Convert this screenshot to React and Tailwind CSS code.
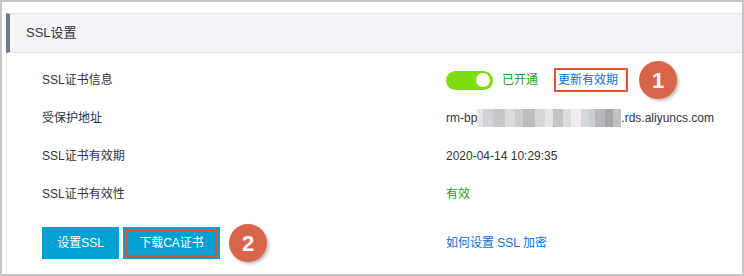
import React from "react";

const blur = [
  "w-[6px] bg-[#e4e4e8]",
  "w-[10px] bg-[#d4d2d6]",
  "w-[12px] bg-[#c9c6ca]",
  "w-[10px] bg-[#dcdadc]",
  "w-[8px] bg-[#cfcccf]",
  "w-[12px] bg-[#bfbcbf]",
  "w-[10px] bg-[#d8d6d8]",
  "w-[8px] bg-[#e6e4e6]",
  "w-[10px] bg-[#c6c3c6]",
  "w-[8px] bg-[#dedcde]",
  "w-[10px] bg-[#eeeef0]",
  "w-[8px] bg-[#d6d6dc]",
  "w-[6px] bg-[#c8d0d6]",
  "w-[10px] bg-[#b9b6b9]",
  "w-[8px] bg-[#a9a6a9]",
  "w-[8px] bg-[#c2c0c2]",
];

function Badge({ n }) {
  return (
    <span className="flex h-[38px] w-[38px] items-center justify-center rounded-full bg-[#d8654a] text-[22px] font-bold text-white shadow-[2px_2px_3px_rgba(0,0,0,0.25)]">
      {n}
    </span>
  );
}

function Row({ label, children }) {
  return (
    <div className="grid h-[38px] grid-cols-[404px_1fr] items-center">
      <span className="text-[#333]">{label}</span>
      <div className="flex items-center">{children}</div>
    </div>
  );
}

export default function App() {
  return (
    <div
      className="h-[276px] w-[744px] overflow-hidden border-2 border-[#c6c6c6] bg-white pl-[4px] pt-[11px] text-[12px]"
      style={{ fontFamily: '"Liberation Sans", "Noto Sans CJK SC", sans-serif' }}
    >
      <div className="h-full border-l border-[#e3e6ea]">
        <div className="-ml-px flex h-[40px] items-center border-y border-[#e1e4e8] border-l-4 border-l-[#6f7984] bg-[#f4f5f8] pl-[16px] text-[13px] text-[#333]">
          SSL设置
        </div>

        <div className="pl-[35px] pt-[8px]">
          <Row label="SSL证书信息">
            <span className="flex h-[19px] w-[47px] items-center justify-end rounded-full bg-[#7ddc12] pr-[3px]">
              <span className="h-[14px] w-[14px] rounded-full bg-white" />
            </span>
            <span className="ml-[9px] text-[#1c9a28]">已开通</span>
            <span className="ml-[16px] flex h-[24px] w-[74px] items-center border-2 border-[#e0522f] pl-[2px] text-[#0a6fd0]">
              更新有效期
            </span>
            <span className="ml-[11px]">
              <Badge n="1" />
            </span>
          </Row>
          <Row label="受保护地址">
            <span className="text-[#333]">rm-bp</span>
            <span className="flex h-[18px] items-center">
              {blur.map((c, i) => (
                <span key={i} className={"h-full " + c} />
              ))}
            </span>
            <span className="text-[#333]">.rds.aliyuncs.com</span>
          </Row>
          <Row label="SSL证书有效期">
            <span className="text-[#333]">2020-04-14 10:29:35</span>
          </Row>
          <Row label="SSL证书有效性">
            <span className="text-[#1c9a28]">有效</span>
          </Row>

          <div className="mt-[11px] grid grid-cols-[404px_1fr] items-center">
            <div className="flex items-center">
              <button className="h-[32px] w-[77px] bg-[#00a0d2] text-white">设置SSL</button>
              <button className="relative ml-[4px] h-[32px] w-[97px] bg-[#00a0d2] text-white">
                <span className="absolute inset-[2px] border-2 border-[#e0522f]" />
                <span className="relative">下载CA证书</span>
              </button>
              <span className="ml-[9px]">
                <Badge n="2" />
              </span>
            </div>
            <span className="text-[#0a6fd0]">如何设置 SSL 加密</span>
          </div>
        </div>
      </div>
    </div>
  );
}
